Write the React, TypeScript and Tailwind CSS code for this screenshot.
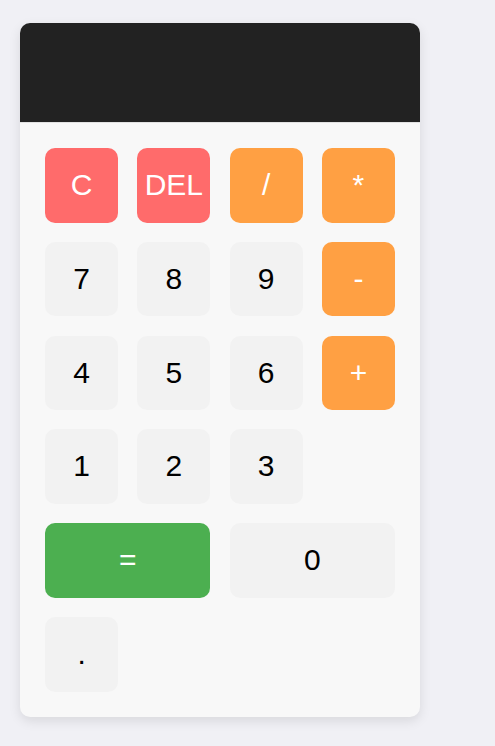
const keys: { label: string; kind: 'clear' | 'op' | 'num' | 'eq'; wide?: boolean }[] = [
  { label: 'C', kind: 'clear' },
  { label: 'DEL', kind: 'clear' },
  { label: '/', kind: 'op' },
  { label: '*', kind: 'op' },
  { label: '7', kind: 'num' },
  { label: '8', kind: 'num' },
  { label: '9', kind: 'num' },
  { label: '-', kind: 'op' },
  { label: '4', kind: 'num' },
  { label: '5', kind: 'num' },
  { label: '6', kind: 'num' },
  { label: '+', kind: 'op' },
  { label: '1', kind: 'num' },
  { label: '2', kind: 'num' },
  { label: '3', kind: 'num' },
  { label: '=', kind: 'eq', wide: true },
  { label: '0', kind: 'num', wide: true },
  { label: '.', kind: 'num' },
]

const kindClass = {
  clear: 'bg-[#ff6b6b] text-white',
  op: 'bg-[#ffa043] text-white',
  num: 'bg-[#f2f2f2] text-black',
  eq: 'bg-[#4caf50] text-white',
}

export default function App() {
  return (
    <div className="min-h-[746px] bg-[#f0f0f5] pl-[20px] pt-[23px] font-['Liberation_Sans',Arial,sans-serif]">
      <div className="w-[400px] overflow-hidden rounded-[10px] bg-[#f8f8f8] shadow-[0_4px_12px_rgba(0,0,0,0.1)]">
        <div className="h-[100px] border-b border-[#e2e2e2] bg-[#222222]" />
        <div className="grid grid-cols-4 gap-[19.2px] p-[25px]">
          {keys.map((k) => (
            <button
              key={k.label}
              className={`${kindClass[k.kind]} ${k.wide ? 'col-span-2' : ''} rounded-[10px] py-[20px] text-[30px] leading-[34.6px]`}
            >
              {k.label}
            </button>
          ))}
        </div>
      </div>
    </div>
  )
}
